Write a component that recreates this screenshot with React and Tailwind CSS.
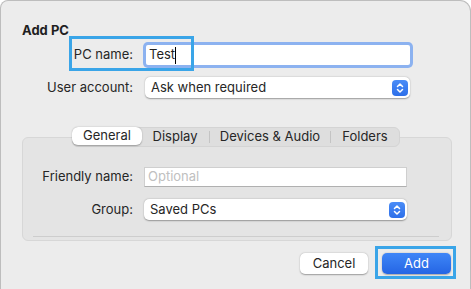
const font = { fontFamily: "Inter, 'Liberation Sans', sans-serif" };

function Stepper() {
  return (
    <div className="w-[16px] h-[16px] rounded-[4px] bg-gradient-to-b from-[#4a8cf7] to-[#2d6fe9] flex items-center justify-center">
      <svg width="10" height="12" viewBox="0 0 10 12" fill="none" stroke="white" strokeWidth="1.5" strokeLinecap="round" strokeLinejoin="round">
        <path d="M2.5 4.5 5 2l2.5 2.5" />
        <path d="M2.5 7.5 5 10l2.5-2.5" />
      </svg>
    </div>
  );
}

function Popup({ value, width }) {
  return (
    <div className={`${width} h-[21px] bg-white rounded-[5px] shadow-[0_0.5px_1.5px_rgba(0,0,0,0.35)] flex items-center justify-between pl-[6px] pr-[2px]`}>
      <span className="text-[13px] text-[#262626]">{value}</span>
      <Stepper />
    </div>
  );
}

export default function App() {
  return (
    <div className="w-[471px] h-[289px] bg-white overflow-hidden relative" style={font}>
      <div className="w-[471px] h-[300px] bg-[#ececec] border-l border-t border-r border-[#bdbdbd] rounded-tl-[8px] rounded-tr-[11px]">
        <div className="pl-[21px] pt-[21px] text-[13px] font-bold text-[#1f1f1f] leading-[16px]">Add PC</div>

        {/* PC name */}
        <div className="flex items-center mt-[7px] h-[20px]">
          <div className="w-[132px] text-right text-[13px] text-[#262626]">PC name:</div>
          <div className="ml-[13px] w-[264px] h-[20px] bg-white ring-[3px] ring-[#8cb2f0] rounded-[2px] flex items-center pl-[3px]">
            <span className="text-[13px] text-[#1f1f1f]">Test</span>
            <span className="w-px h-[17px] bg-black"></span>
          </div>
        </div>

        {/* User account */}
        <div className="flex items-center mt-[12px]">
          <div className="w-[132px] text-right text-[13px] text-[#262626]">User account:</div>
          <div className="ml-[12px]">
            <Popup value="Ask when required" width="w-[265px]" />
          </div>
        </div>

        {/* Tabs */}
        <div className="mt-[29px] flex justify-center relative z-10 mb-[-10px] pl-[1px]">
          <div className="flex h-[20px] bg-[#dedede] rounded-[6px] border border-[#d4d4d4] text-[13px] text-[#262626]">
            <div className="w-[70px] h-full bg-white rounded-[6px] shadow-[0_0.5px_1.5px_rgba(0,0,0,0.3)] flex items-center justify-center -m-px h-[20px]">General</div>
            <div className="w-[68px] flex items-center justify-center">Display</div>
            <div className="w-px h-[12px] bg-[#c4c4c4] self-center"></div>
            <div className="w-[120px] flex items-center justify-center">Devices &amp; Audio</div>
            <div className="w-px h-[12px] bg-[#c4c4c4] self-center"></div>
            <div className="w-[68px] flex items-center justify-center">Folders</div>
          </div>
        </div>

        {/* Panel */}
        <div className="ml-[21px] w-[430px] h-[104px] bg-[#e4e4e4] border border-[#d7d7d7] rounded-[6px] pt-[29px]">
          <div className="flex items-center">
            <div className="w-[110px] text-right text-[13px] text-[#262626]">Friendly name:</div>
            <div className="ml-[11px] w-[263px] h-[20px] bg-white border border-[#cfcfcf] border-b-[#b0b0b0] flex items-center pl-[3px]">
              <span className="text-[13px] text-[#c0c0c0]">Optional</span>
            </div>
          </div>
          <div className="flex items-center mt-[12px]">
            <div className="w-[110px] text-right text-[13px] text-[#262626]">Group:</div>
            <div className="ml-[11px]">
              <Popup value="Saved PCs" width="w-[263px]" />
            </div>
          </div>
          <div className="ml-[10px] mr-[12px] mt-[16px] h-px bg-[#cdcdcd]"></div>
        </div>

        {/* Buttons */}
        <div className="flex justify-end mt-[12px] pr-[19px] gap-[14px]">
          <div className="w-[68px] h-[21px] bg-white rounded-[5px] shadow-[0_0.5px_1.5px_rgba(0,0,0,0.35)] flex items-center justify-center text-[13px] text-[#262626]">Cancel</div>
          <div className="w-[69px] h-[21px] rounded-[5px] bg-gradient-to-b from-[#3f86f7] to-[#2565e4] shadow-[0_0.5px_1.5px_rgba(0,0,0,0.3)] flex items-center justify-center text-[13px] text-white">Add</div>
        </div>
      </div>

      {/* annotation boxes */}
      <div className="absolute left-[69px] top-[36px] w-[125px] h-[35px] border-[3px] border-[#3aa5e8]"></div>
      <div className="absolute left-[375px] top-[246px] w-[81px] h-[33px] border-[3px] border-[#3aa5e8]"></div>
    </div>
  );
}
